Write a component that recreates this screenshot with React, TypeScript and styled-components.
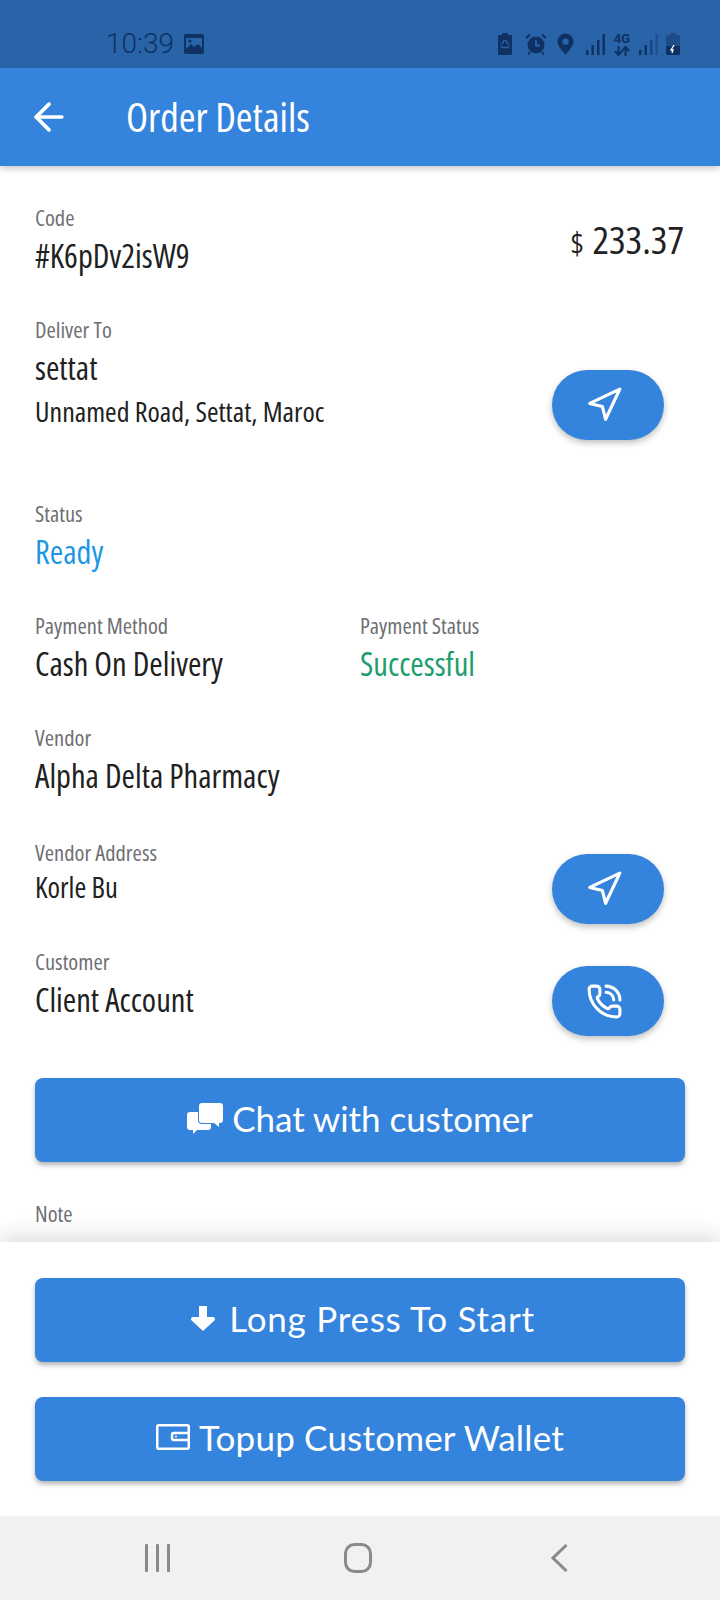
import React from "react";
import styled, { createGlobalStyle } from "styled-components";
import { ArrowLeft, Navigation, PhoneCall } from "lucide-react";

const GlobalStyle = createGlobalStyle`
  html, body { margin: 0; padding: 0; background: #ffffff; }
  * { box-sizing: border-box; }
`;

const Screen = styled.div`
  width: 720px;
  height: 1600px;
  display: flex;
  flex-direction: column;
  overflow: hidden;
  background: #ffffff;
  font-family: "Open Sans", "Liberation Sans", sans-serif;
  font-stretch: 75%;
`;

const StatusBar = styled.div`
  height: 68px;
  flex-shrink: 0;
  display: flex;
  align-items: center;
  justify-content: space-between;
  padding: 20px 40px 0 106px;
  background: #2963a8;
  color: #0f3163;
`;

const StatusLeft = styled.div`
  display: flex;
  align-items: center;
  gap: 10px;
`;

const Clock = styled.span`
  font-family: Roboto, sans-serif;
  font-stretch: 100%;
  font-size: 28px;
  font-weight: 300;
  line-height: 30px;
`;

const StatusRight = styled.div`
  display: flex;
  align-items: center;
`;

const AppBar = styled.header`
  position: relative;
  z-index: 2;
  height: 98px;
  flex-shrink: 0;
  display: flex;
  align-items: center;
  padding: 0 0 0 27px;
  background: #3483dc;
  color: #ffffff;
  box-shadow: 0 3px 6px rgba(0, 0, 0, 0.2);
`;

const Title = styled.h1`
  margin: 0 0 0 55px;
  font-size: 40.5px;
  font-weight: 500;
  line-height: 50px;
`;

const Content = styled.main`
  flex: 1;
  min-height: 0;
  overflow: hidden;
  padding: 36px 35px 0;
`;

const Row = styled.div<{ $mt?: number }>`
  display: flex;
  justify-content: space-between;
  align-items: flex-start;
  margin-top: ${(p) => p.$mt ?? 34}px;
`;

const TwoColumns = styled.div`
  display: grid;
  grid-template-columns: 325px 1fr;
  margin-top: 34px;
`;

const Label = styled.div`
  height: 30px;
  font-size: 22.5px;
  line-height: 32px;
  color: #6f6f74;
  white-space: nowrap;
`;

const Value = styled.div<{ $color?: string }>`
  font-size: 32.5px;
  font-weight: ${(p) => (p.$color ? 500 : 400)};
  line-height: 48px;
  color: ${(p) => p.$color ?? "#212121"};
  white-space: nowrap;
`;

const SmallValue = styled.div<{ $mt: number; $size: number }>`
  margin-top: ${(p) => p.$mt}px;
  font-size: ${(p) => p.$size}px;
  line-height: 36px;
  color: #212121;
  white-space: nowrap;
`;

const Price = styled.div`
  display: flex;
  align-items: baseline;
  gap: 9px;
  margin: 14px 1px 0 0;
  font-size: 39px;
  line-height: 46px;
  color: #212121;
`;

const Currency = styled.span`
  font-size: 30px;
`;

const RoundButton = styled.button<{ $drop: number }>`
  width: 112px;
  height: 70px;
  align-self: flex-end;
  margin: 0 21px ${(p) => -p.$drop}px 0;
  padding: 0 8px 0 0;
  display: flex;
  align-items: center;
  justify-content: center;
  border: none;
  border-radius: 35px;
  background: #3483dc;
  color: #ffffff;
  box-shadow: 0 3px 6px rgba(0, 0, 0, 0.25);
`;

const WideButton = styled.button<{ $mt?: number; $spacing?: number }>`
  width: 650px;
  height: 84px;
  flex-shrink: 0;
  margin-top: ${(p) => p.$mt ?? 0}px;
  padding: 0 0 4px;
  display: flex;
  align-items: center;
  justify-content: center;
  gap: 9px;
  border: none;
  border-radius: 8px;
  background: #3483dc;
  color: #ffffff;
  font-family: Lato, "Liberation Sans", sans-serif;
  font-stretch: 100%;
  font-size: 35px;
  letter-spacing: ${(p) => p.$spacing ?? 0}px;
  box-shadow: 0 3px 5px rgba(0, 0, 0, 0.3);
`;

const Footer = styled.footer`
  position: relative;
  z-index: 2;
  height: 274px;
  flex-shrink: 0;
  display: flex;
  flex-direction: column;
  gap: 35px;
  padding: 36px 35px 0;
  background: #ffffff;
  box-shadow: 0 -2px 24px rgba(0, 0, 0, 0.18);
`;

const NavBar = styled.nav`
  position: relative;
  z-index: 3;
  height: 84px;
  flex-shrink: 0;
  display: flex;
  justify-content: center;
  align-items: center;
  padding-right: 4px;
  background: #f1f1f1;
  color: #8a8a8a;
`;

const NavCell = styled.div`
  width: 201px;
  display: flex;
  justify-content: center;
`;

const Svg = styled.svg<{ $ml?: number; $mr?: number }>`
  display: block;
  flex-shrink: 0;
  margin-left: ${(p) => p.$ml ?? 0}px;
  margin-right: ${(p) => p.$mr ?? 0}px;
`;

const ImageIcon = () => (
  <Svg width="20" height="20" viewBox="0 0 20 20">
    <rect width="20" height="20" rx="2" fill="currentColor" />
    <path d="M2 4h16v10l-4-4-4 3-3-3-5 5z" fill="#2963a8" />
    <circle cx="6" cy="7" r="1.6" fill="currentColor" />
  </Svg>
);

const RecycleBatteryIcon = () => (
  <Svg width="14" height="22" viewBox="0 0 14 22">
    <path d="M4 0h6v2h3a1 1 0 0 1 1 1v18a1 1 0 0 1-1 1H1a1 1 0 0 1-1-1V3a1 1 0 0 1 1-1h3z" fill="currentColor" />
    <path d="M6 7.500L4 11M8 7.500l2 3.500M3.500 14.500h7" stroke="#2963a8" strokeWidth="1.500" fill="none" />
    <path d="M5.500 7.500h3M3.500 11.500l-.5 3M10.500 11.500l.5 3" stroke="#2963a8" strokeWidth="1" fill="none" />
  </Svg>
);

const AlarmIcon = () => (
  <Svg width="22" height="22" viewBox="0 0 22 22" $ml={13}>
    <circle cx="11" cy="12" r="8.500" fill="currentColor" />
    <path d="M11 7v5.500h4" stroke="#2963a8" strokeWidth="1.800" fill="none" />
    <path d="M1 5l4-3.500M21 5l-4-3.500M5 19l-2 2.500M17 19l2 2.500" stroke="currentColor" strokeWidth="2" fill="none" />
  </Svg>
);

const PinIcon = () => (
  <Svg width="17" height="22" viewBox="0 0 18 22" $ml={10}>
    <path d="M9 0a8.500 8.500 0 0 1 8.500 8.500C17.500 14 9 22 9 22S.5 14 .5 8.500A8.500 8.500 0 0 1 9 0z" fill="currentColor" />
    <circle cx="9" cy="8.500" r="3.400" fill="#2963a8" />
  </Svg>
);

const SignalIcon = ({ faded, ml }: { faded?: boolean; ml: number }) => (
  <Svg width="19" height="21" viewBox="0 0 19 21" fill="currentColor" $ml={ml}>
    <rect x="0" y="16" width="2.500" height="5" />
    <rect x="5.500" y="11" width="2.500" height="10" />
    <rect x="11" y="6" width="2.500" height="15" opacity={faded ? 0.55 : 1} />
    <rect x="16.500" y="0" width="2.500" height="21" opacity={faded ? 0.35 : 1} />
  </Svg>
);

const NetworkLabel = styled.span`
  display: flex;
  flex-direction: column;
  align-items: center;
  gap: 1px;
  width: 16px;
  margin-left: 9px;
  font-family: Roboto, sans-serif;
  font-stretch: 100%;
  font-size: 13px;
  font-weight: 700;
  line-height: 12px;
`;

const TransferArrows = () => (
  <Svg width="16" height="10" viewBox="0 0 16 10" fill="none" stroke="currentColor" strokeWidth="2">
    <path d="M4.500 0v8M1 5l3.500 4L8 5" />
    <path d="M11.500 10V2M8 5l3.500-4L15 5" />
  </Svg>
);

const ChargingBatteryIcon = () => (
  <Svg width="14" height="22" viewBox="0 0 14 22" $ml={8}>
    <path d="M4 0h6v2h3a1 1 0 0 1 1 1v18a1 1 0 0 1-1 1H1a1 1 0 0 1-1-1V3a1 1 0 0 1 1-1h3z" fill="currentColor" opacity="0.45" />
    <path d="M0 13h14v8a1 1 0 0 1-1 1H1a1 1 0 0 1-1-1z" fill="currentColor" />
    <path d="M8 12l-3 5h2l-1 3" stroke="#ffffff" strokeWidth="1.300" fill="none" />
  </Svg>
);

const ChatIcon = () => (
  <Svg width="36" height="31" viewBox="0 0 36 31" fill="currentColor">
    <path d="M3 9h18a3 3 0 0 1 3 3v12a3 3 0 0 1-3 3H10l-4 4v-4H3a3 3 0 0 1-3-3V12a3 3 0 0 1 3-3z" />
    <path
      d="M15 0h18a3 3 0 0 1 3 3v14a3 3 0 0 1-3 3h-1v4l-5-4H15a3 3 0 0 1-3-3V3a3 3 0 0 1 3-3z"
      stroke="#3483dc"
      strokeWidth="2"
      paintOrder="stroke"
    />
  </Svg>
);

const ArrowDownIcon = () => (
  <Svg width="24" height="25" viewBox="0 0 24 25" fill="currentColor" $ml={6} $mr={5}>
    <path d="M8 0h8v11h6a2 2 0 0 1 1.400 3.400L12 25 .6 14.400A2 2 0 0 1 2 11h6z" />
  </Svg>
);

const WalletIcon = () => (
  <Svg width="34" height="26" viewBox="0 0 34 26" fill="none" stroke="currentColor" strokeWidth="2.500">
    <rect x="1.250" y="1.250" width="31.500" height="23.500" rx="1.500" />
    <path d="M32 9H18a2 2 0 0 0-2 2v3a2 2 0 0 0 2 2h14" />
    <path d="M19 12.500h2" strokeWidth="1.500" />
  </Svg>
);

const MenuIcon = () => (
  <Svg width="25" height="28" viewBox="0 0 25 28" fill="currentColor">
    <rect x="0" y="0" width="3" height="28" rx="1" />
    <rect x="11" y="0" width="3" height="28" rx="1" />
    <rect x="22" y="0" width="3" height="28" rx="1" />
  </Svg>
);

const HomeIcon = () => (
  <Svg width="28" height="30" viewBox="0 0 28 30" fill="none" stroke="currentColor" strokeWidth="3">
    <rect x="1.500" y="1.500" width="25" height="27" rx="9" />
  </Svg>
);

const BackIcon = () => (
  <Svg width="17" height="28" viewBox="0 0 17 28" fill="none" stroke="currentColor" strokeWidth="3">
    <path d="M15.500 1L2 14l13.500 13" />
  </Svg>
);

export default function App() {
  return (
    <Screen>
      <GlobalStyle />
      <StatusBar>
        <StatusLeft>
          <Clock>10:39</Clock>
          <ImageIcon />
        </StatusLeft>
        <StatusRight>
          <RecycleBatteryIcon />
          <AlarmIcon />
          <PinIcon />
          <SignalIcon ml={12} />
          <NetworkLabel>
            4G
            <TransferArrows />
          </NetworkLabel>
          <SignalIcon faded ml={9} />
          <ChargingBatteryIcon />
        </StatusRight>
      </StatusBar>

      <AppBar>
        <ArrowLeft size={44} strokeWidth={2} />
        <Title>Order Details</Title>
      </AppBar>

      <Content>
        <Row $mt={0}>
          <div>
            <Label>Code</Label>
            <Value>#K6pDv2isW9</Value>
          </div>
          <Price>
            <Currency>$</Currency>
            233.37
          </Price>
        </Row>

        <Row>
          <div>
            <Label>Deliver To</Label>
            <Value>settat</Value>
            <SmallValue $mt={1} $size={28}>
              Unnamed Road, Settat, Maroc
            </SmallValue>
          </div>
          <RoundButton $drop={11}>
            <Navigation size={38} strokeWidth={2} />
          </RoundButton>
        </Row>

        <Row $mt={69}>
          <div>
            <Label>Status</Label>
            <Value $color="#1e96e6">Ready</Value>
          </div>
        </Row>

        <TwoColumns>
          <div>
            <Label>Payment Method</Label>
            <Value>Cash On Delivery</Value>
          </div>
          <div>
            <Label>Payment Status</Label>
            <Value $color="#1d9e6e">Successful</Value>
          </div>
        </TwoColumns>

        <Row>
          <div>
            <Label>Vendor</Label>
            <Value>Alpha Delta Pharmacy</Value>
          </div>
        </Row>

        <Row $mt={37}>
          <div>
            <Label>Vendor Address</Label>
            <SmallValue $mt={2} $size={28.5}>
              Korle Bu
            </SmallValue>
          </div>
          <RoundButton $drop={19}>
            <Navigation size={38} strokeWidth={2} />
          </RoundButton>
        </Row>

        <Row $mt={41}>
          <div>
            <Label>Customer</Label>
            <Value>Client Account</Value>
          </div>
          <RoundButton $drop={12}>
            <PhoneCall size={37} strokeWidth={2} />
          </RoundButton>
        </Row>

        <WideButton $mt={54} $spacing={-0.05}>
          <ChatIcon />
          Chat with customer
        </WideButton>

        <Row $mt={36}>
          <Label>Note</Label>
        </Row>
      </Content>

      <Footer>
        <WideButton $spacing={0.75}>
          <ArrowDownIcon />
          Long Press To Start
        </WideButton>
        <WideButton $spacing={0.2}>
          <WalletIcon />
          Topup Customer Wallet
        </WideButton>
      </Footer>

      <NavBar>
        <NavCell>
          <MenuIcon />
        </NavCell>
        <NavCell>
          <HomeIcon />
        </NavCell>
        <NavCell>
          <BackIcon />
        </NavCell>
      </NavBar>
    </Screen>
  );
}
